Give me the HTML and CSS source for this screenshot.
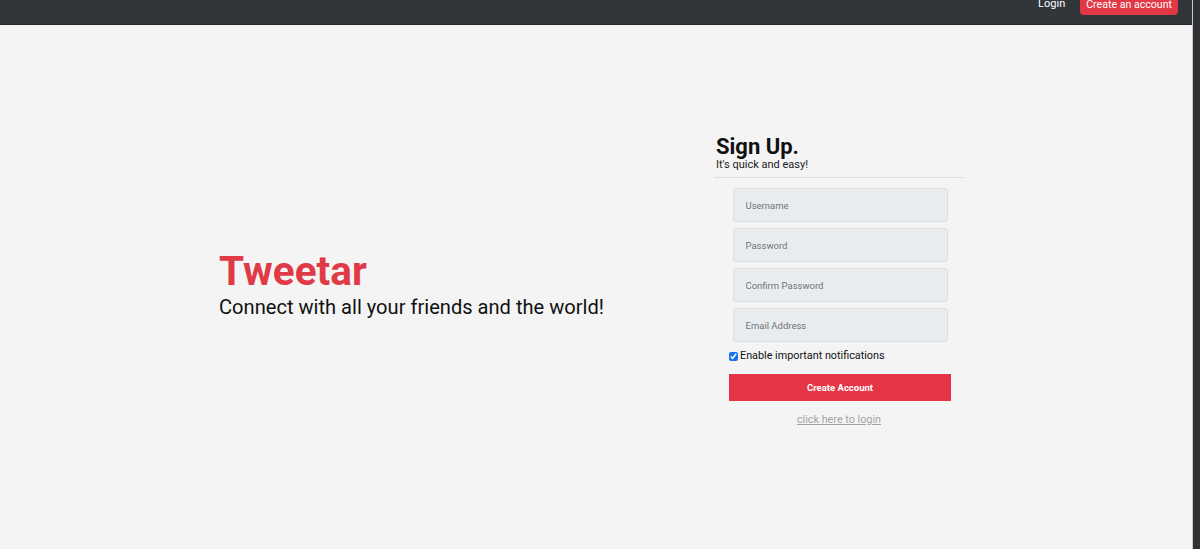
FILE: index.html
```html
<!DOCTYPE html>
<html>
<head>
<meta charset="utf-8">
<link rel="stylesheet" href="styles.css">
</head>
<body>
<div class="frame">
  <div class="page">
    <nav class="navbar">
      <a class="nav-login" href="#">Login</a>
      <a class="nav-create" href="#">Create an account</a>
    </nav>
    <main class="main">
      <section class="hero">
        <h1 class="brand">Tweetar</h1>
        <p class="tagline">Connect with all your friends and the world!</p>
      </section>
      <section class="signup">
        <h2 class="signup-title">Sign Up.</h2>
        <p class="signup-sub">It's quick and easy!</p>
        <hr class="divider">
        <form class="form">
          <input class="field" type="text" placeholder="Username">
          <input class="field" type="password" placeholder="Password">
          <input class="field" type="password" placeholder="Confirm Password">
          <input class="field" type="email" placeholder="Email Address">
          <label class="check"><input type="checkbox" checked> Enable important notifications</label>
          <button class="submit" type="button">Create Account</button>
          <a class="login-link" href="#">click here to login</a>
        </form>
      </section>
    </main>
  </div>
  <div class="edge"></div>
</div>
</body>
</html>
```

FILE: styles.css
```css
* { box-sizing: border-box; }
html, body { margin: 0; padding: 0; height: 100%; overflow: hidden; }
body { font-family: Roboto, "Liberation Sans", sans-serif; background: #2b2e32; }
.frame { display: flex; height: 549px; }
.page { width: 1193px; background: #f4f4f4; display: flex; flex-direction: column; border-right: 1px solid #c9c9c9; }
.edge { flex: 1; background: #2e3033; }
.navbar {
  height: 25px; background: #31363b; display: flex; justify-content: flex-end;
  align-items: flex-start; padding-right: 14px; gap: 14px; overflow: hidden;
  border-bottom: 1px solid #23272b;
}
.nav-login { color: #fff; text-decoration: none; font-size: 11px; margin-top: -4px; margin-right: 1px; line-height: 16px; }
.nav-create {
  background: #e23744; color: #fff; text-decoration: none; font-size: 10.6px;
  line-height: 16px; padding: 6px 6px 2px; margin-top: -9px; border-radius: 4px;
}
.main { flex: 1; display: flex; align-items: flex-start; }
.hero { width: 714px; padding-left: 219px; padding-top: 222px; }
.brand { margin: 0; font-size: 40.5px; font-weight: 700; color: #e13a47; line-height: 48px; }
.tagline { margin: 0; font-size: 20.1px; color: #111; line-height: 25px; }
.signup { width: 250px; padding-top: 108px; }
.signup-title { margin: 0 0 0 2px; font-size: 22px; font-weight: 700; color: #111; line-height: 28px; }
.signup-sub { margin: -3px 0 0 2px; font-size: 11px; color: #222; line-height: 13px; }
.divider { margin: 6px 0 10px; border: 0; border-top: 1px solid #e0dcd8; }
.form { display: flex; flex-direction: column; align-items: center; }
.field {
  width: 215px; height: 34px; margin: 0 0 6px 2px; background: #e9ecef;
  border: 1px solid #dde0e3; border-radius: 3px; padding: 0 12px;
  font-family: Roboto, "Liberation Sans", sans-serif; font-size: 9.5px; color: #333;
}
.field::placeholder { color: #6c757d; }
.check {
  align-self: flex-start; margin-left: 15px; margin-top: 1px; font-size: 10.8px; color: #111;
  display: flex; align-items: center; gap: 2px; line-height: 14px;
}
.check input { width: 9px; height: 9px; margin: 0; accent-color: #1a73e8; }
.submit {
  margin: 11px 0 0 2px; width: 222px; height: 27px; background: #e63546; color: #fff; border: 0;
  font-family: Roboto, "Liberation Sans", sans-serif; font-weight: 700; font-size: 9.5px;
}
.login-link { margin-top: 12px; font-size: 10.8px; color: #a3a3a3; text-decoration: underline; }
```
